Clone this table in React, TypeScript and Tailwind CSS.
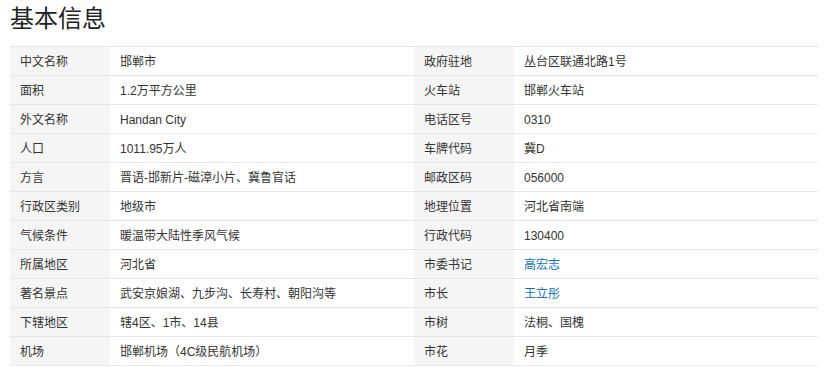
import React from "react";

type Cell = { label: string; value: string; link?: boolean };

const rows: [Cell, Cell][] = [
  [{ label: "中文名称", value: "邯郸市" }, { label: "政府驻地", value: "丛台区联通北路1号" }],
  [{ label: "面积", value: "1.2万平方公里" }, { label: "火车站", value: "邯郸火车站" }],
  [{ label: "外文名称", value: "Handan City" }, { label: "电话区号", value: "0310" }],
  [{ label: "人口", value: "1011.95万人" }, { label: "车牌代码", value: "冀D" }],
  [{ label: "方言", value: "晋语-邯新片-磁漳小片、冀鲁官话" }, { label: "邮政区码", value: "056000" }],
  [{ label: "行政区类别", value: "地级市" }, { label: "地理位置", value: "河北省南端" }],
  [{ label: "气候条件", value: "暖温带大陆性季风气候" }, { label: "行政代码", value: "130400" }],
  [{ label: "所属地区", value: "河北省" }, { label: "市委书记", value: "高宏志", link: true }],
  [{ label: "著名景点", value: "武安京娘湖、九步沟、长寿村、朝阳沟等" }, { label: "市长", value: "王立彤", link: true }],
  [{ label: "下辖地区", value: "辖4区、1市、14县" }, { label: "市树", value: "法桐、国槐" }],
  [{ label: "机场", value: "邯郸机场（4C级民航机场）" }, { label: "市花", value: "月季" }],
];

function Half({ c }: { c: Cell }) {
  return (
    <div className="flex w-[404px] h-full">
      <div className="w-[100px] shrink-0 bg-[#f5f5f5] pl-[10px] pt-[2px] flex items-center">{c.label}</div>
      <div className={"pl-[10px] pt-[2px] flex items-center " + (c.link ? "text-[#136ec2]" : "")}>{c.value}</div>
    </div>
  );
}

export default function App() {
  return (
    <div
      className="w-[829px] h-[377px] bg-white px-[10px] text-[#333]"
      style={{ fontFamily: '"Liberation Sans", "Noto Sans CJK SC", sans-serif' }}
    >
      <div className="h-[46px] pt-[4px] text-[24px] leading-[30px] text-[#222]">基本信息</div>
      <div className="w-[808px] border-t border-[#e6e6e6] text-[12px]">
        {rows.map((r, i) => (
          <div key={i} className="flex h-[29px] border-b border-[#e6e6e6]">
            <Half c={r[0]} />
            <Half c={r[1]} />
          </div>
        ))}
      </div>
    </div>
  );
}
